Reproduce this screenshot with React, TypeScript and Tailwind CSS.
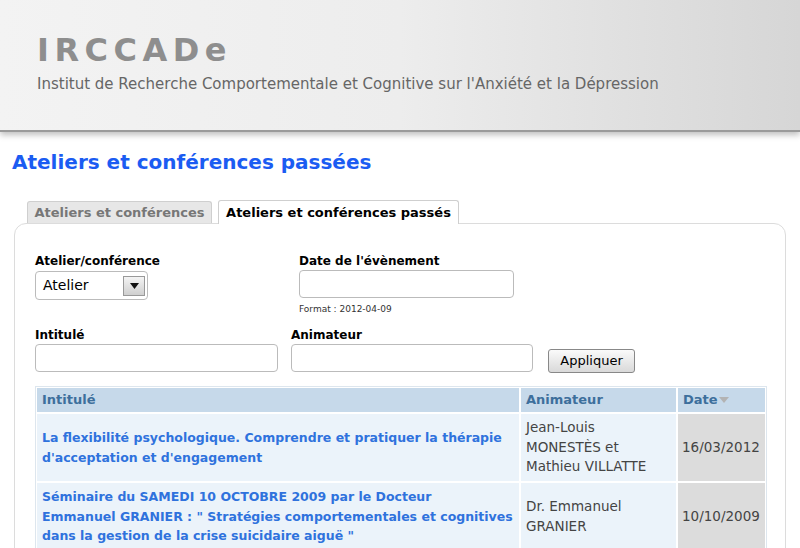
const font = "font-['DejaVu_Sans','Liberation_Sans',sans-serif]";

const rows = [
  {
    title: [
      "La flexibilité psychologique. Comprendre et pratiquer la thérapie",
      "d'acceptation et d'engagement",
    ],
    who: "Jean-Louis MONESTÈS et Mathieu VILLATTE",
    date: "16/03/2012",
  },
  {
    title: [
      "Séminaire du SAMEDI 10 OCTOBRE 2009 par le Docteur",
      'Emmanuel GRANIER : " Stratégies comportementales et cognitives',
      'dans la gestion de la crise suicidaire aiguë "',
    ],
    who: "Dr. Emmanuel GRANIER",
    date: "10/10/2009",
  },
];

export default function App() {
  return (
    <div className={`h-[548px] w-[800px] overflow-hidden bg-white ${font}`}>
      <Header />
      <h1 className="ml-3 mt-[17px] text-[20px] font-bold leading-[26px] text-[#1b5cf2]">
        Ateliers et conférences passées
      </h1>
      <div className="mx-[14px] mt-[24px]">
        <Tabs />
        <Panel />
      </div>
    </div>
  );
}

function Header() {
  return (
    <div className="h-[132px] border-b-2 border-[#9a9a9a] bg-gradient-to-r from-[#f3f3f3] via-[#ededed] to-[#d6d6d6] pl-[37px] pt-[33px] shadow-[0_3px_6px_rgba(0,0,0,0.25)]">
      <div className="text-[32px] font-bold leading-[34px] tracking-[5.5px] text-[#8e8e8e]">IRCCADe</div>
      <div className="mt-[7px] text-[15px] leading-[20px] text-[#666]">
        Institut de Recherche Comportementale et Cognitive sur l'Anxiété et la Dépression
      </div>
    </div>
  );
}

function Tabs() {
  return (
    <div className="flex items-end gap-[6px] pl-[13px]">
      <div className="h-[22px] w-[185px] rounded-t-[3px] border border-b-0 border-[#cfcfcf] bg-[#e7e7e7] text-center text-[13px] font-bold leading-[21px] text-[#777]">
        Ateliers et conférences
      </div>
      <div className="relative top-px h-[24px] w-[241px] rounded-t-[3px] border border-b-0 border-[#cfcfcf] bg-white text-center text-[13px] font-bold leading-[23px] text-black">
        Ateliers et conférences passés
      </div>
    </div>
  );
}

function Panel() {
  return (
    <div className="h-[400px] rounded-t-[12px] border border-[#dcdcdc] pl-[20px] pt-[29px]">
      <div className="flex">
        <div className="w-[264px]">
          <Label>Atelier/conférence</Label>
          <div className="mt-[2px] flex h-[29px] w-[113px] items-center justify-between rounded-[4px] border border-[#bbb] pl-[7px] pr-[2px] text-[14px] text-black">
            Atelier
            <span className="flex h-[20px] w-[22px] items-center justify-center border border-[#999] bg-gradient-to-b from-[#f4f4f4] to-[#cfcfcf]">
              <svg width="9" height="6" viewBox="0 0 9 6">
                <path d="M0 0h9L4.5 6z" fill="#111" />
              </svg>
            </span>
          </div>
        </div>
        <div>
          <Label>Date de l'évènement</Label>
          <div className="mt-[1px] h-[28px] w-[215px] rounded-[4px] border border-[#bbb]" />
          <div className="mt-[5px] text-[9px] leading-[12px] text-[#333]">Format : 2012-04-09</div>
        </div>
      </div>
      <div className="mt-[12px] flex items-end">
        <div className="w-[256px]">
          <Label>Intitulé</Label>
          <div className="mt-[1px] h-[28px] w-[243px] rounded-[4px] border border-[#bbb]" />
        </div>
        <div className="w-[257px]">
          <Label>Animateur</Label>
          <div className="mt-[1px] h-[28px] w-[242px] rounded-[4px] border border-[#bbb]" />
        </div>
        <button className="mb-[-1px] h-[24px] w-[87px] rounded-[3px] border border-[#888] bg-gradient-to-b from-[#fafafa] to-[#d9d9d9] text-[13px] text-black">
          Appliquer
        </button>
      </div>
      <Table />
    </div>
  );
}

function Label({ children }: { children: React.ReactNode }) {
  return <div className="text-[12px] font-bold leading-[16px] text-black">{children}</div>;
}

function Table() {
  const head = "h-[24px] bg-[#c6d9ea] pl-[5px] text-[13px] font-bold leading-[24px] text-[#3d6f9c]";
  return (
    <div className="mt-[14px] w-[732px] border border-[#dde6ee] p-px">
      <div className="grid grid-cols-[482px_155px_1fr] gap-[2px] bg-white">
        <div className={head}>Intitulé</div>
        <div className={head}>Animateur</div>
        <div className={`flex items-center ${head}`}>
          Date
          <svg width="10" height="6" viewBox="0 0 10 6" className="ml-[1px]">
            <path d="M0 0h10L5 6z" fill="#b3b3b3" />
          </svg>
        </div>
        {rows.map((r) => (
          <Row key={r.date} {...r} />
        ))}
      </div>
    </div>
  );
}

function Row({ title, who, date }: { title: string[]; who: string; date: string }) {
  return (
    <>
      <div className="flex min-h-[67px] flex-col justify-center bg-[#ebf3fa] px-[5px] text-[12.5px] font-bold leading-[19.5px] text-[#2f72dd]">
        {title.map((line) => (
          <span key={line} className="whitespace-nowrap">
            {line}
          </span>
        ))}
      </div>
      <div className="flex items-center bg-[#ebf3fa] px-[5px] text-[13.5px] leading-[19.5px] text-[#444]">{who}</div>
      <div className="flex items-center bg-[#dcdcdc] pl-[4px] text-[13.5px] text-[#444]">{date}</div>
    </>
  );
}
